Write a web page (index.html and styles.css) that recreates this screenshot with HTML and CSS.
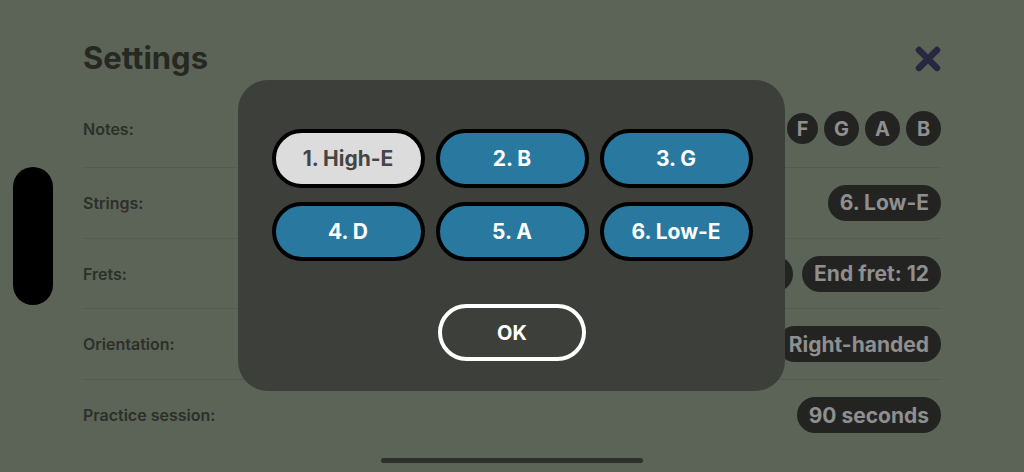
FILE: index.html
```html
<!DOCTYPE html>
<html>
<head>
<meta charset="utf-8">
<link rel="stylesheet" href="styles.css">
</head>
<body>
<div class="screen">
  <div class="header">
    <h1 class="title">Settings</h1>
    <svg class="close" width="26" height="26" viewBox="0 0 26 26"><path d="M4 4 L22 22 M22 4 L4 22" stroke="#28273f" stroke-width="6.5" stroke-linecap="round"/></svg>
  </div>
  <div class="rows">
    <div class="row row-first">
      <span class="label">Notes:</span>
      <div class="notes">
        <span class="note">C</span><span class="note">D</span><span class="note">E</span><span class="note note-f">F</span><span class="note">G</span><span class="note">A</span><span class="note">B</span>
      </div>
    </div>
    <div class="row">
      <span class="label">Strings:</span>
      <div class="pills"><span class="pill">6. Low-E</span></div>
    </div>
    <div class="row">
      <span class="label">Frets:</span>
      <div class="pills"><span class="pill">Start fret: 0</span><span class="pill">End fret: 12</span></div>
    </div>
    <div class="row">
      <span class="label">Orientation:</span>
      <div class="pills"><span class="pill">Right-handed</span></div>
    </div>
    <div class="row row-last">
      <span class="label">Practice session:</span>
      <div class="pills"><span class="pill">90 seconds</span></div>
    </div>
  </div>
  <div class="side-handle"></div>
  <div class="modal">
    <div class="string-grid">
      <button class="sbtn sbtn-on">1. High-E</button>
      <button class="sbtn">2. B</button>
      <button class="sbtn">3. G</button>
      <button class="sbtn">4. D</button>
      <button class="sbtn">5. A</button>
      <button class="sbtn">6. Low-E</button>
    </div>
    <button class="ok">OK</button>
  </div>
  <div class="home-indicator"></div>
</div>
</body>
</html>
```
FILE: styles.css
```css
* { box-sizing: border-box; }
html, body { margin: 0; padding: 0; }
body {
  width: 1024px;
  height: 472px;
  overflow: hidden;
  background: #5c6457;
  font-family: Inter, "Noto Sans", sans-serif;
}
.screen {
  position: relative;
  width: 1024px;
  height: 472px;
  padding: 40px 83px 0 83px;
}
.header {
  display: flex;
  justify-content: space-between;
  align-items: center;
  height: 36px;
}
.title {
  margin: 0;
  font-size: 31px;
  font-weight: 700;
  color: #262822;
  line-height: 36px;
}
.close { display: block; margin-top: 1px; }
.rows { margin-top: 14px; }
.row {
  display: flex;
  justify-content: space-between;
  align-items: center;
  height: 70.7px;
  border-bottom: 1px solid #545b50;
}
.row-first { height: 78px; }
.row-last { border-bottom: none; }
.label {
  font-size: 16px;
  font-weight: 600;
  color: #2c2f2a;
}
.notes { display: flex; gap: 6px; align-items: center; }
.note {
  width: 35px;
  height: 35px;
  border-radius: 50%;
  background: #232422;
  color: #8f8f8f;
  font-size: 20px;
  font-weight: 700;
  display: flex;
  align-items: center;
  justify-content: center;
}
.note-f { width: 31px; height: 31px; }
.pills { display: flex; gap: 9px; }
.pill {
  height: 36px;
  border-radius: 18px;
  background: #232422;
  color: #8f8f8f;
  font-size: 21px;
  font-weight: 700;
  padding: 0 12px;
  display: flex;
  align-items: center;
}
.side-handle {
  position: absolute;
  left: 13px;
  top: 167px;
  width: 40px;
  height: 138px;
  border-radius: 20px;
  background: #000;
}
.modal {
  position: absolute;
  left: 238px;
  top: 80px;
  width: 547px;
  height: 311px;
  border-radius: 30px;
  background: #3d3f3b;
  padding: 49px 32px 0 33px;
  display: flex;
  flex-direction: column;
  align-items: center;
}
.string-grid {
  display: grid;
  grid-template-columns: repeat(3, 153px);
  column-gap: 11px;
  row-gap: 14px;
}
.sbtn {
  height: 59px;
  border: 4px solid #000;
  border-radius: 30px;
  background: #2878a0;
  color: #fff;
  font-family: Inter, "Noto Sans", sans-serif;
  font-size: 21px;
  font-weight: 700;
  padding: 0;
}
.sbtn-on {
  background: #dcdcdc;
  color: #454545;
}
.ok {
  margin-top: 43px;
  width: 148px;
  height: 57px;
  border: 4px solid #fff;
  border-radius: 29px;
  background: transparent;
  color: #fff;
  font-family: Inter, "Noto Sans", sans-serif;
  font-size: 20px;
  font-weight: 700;
  padding: 0;
}
.home-indicator {
  position: absolute;
  left: 381px;
  top: 458px;
  width: 262px;
  height: 5px;
  border-radius: 3px;
  background: #2e302c;
}
```
